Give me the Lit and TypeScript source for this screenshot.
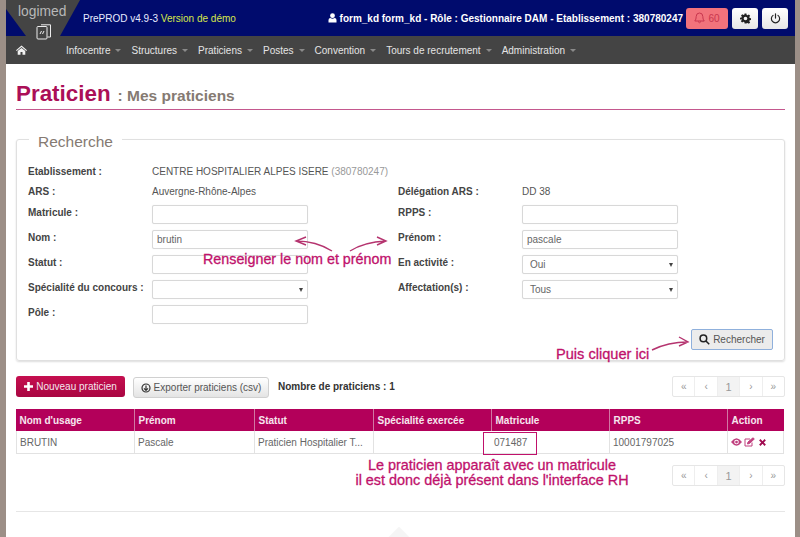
import { LitElement, html, css, svg } from "lit";
import { customElement } from "lit/decorators.js";

const caret = html`<i class="caret"></i>`;
const pager = html`<div class="pager"><span>«</span><span>‹</span><span class="cur">1</span><span>›</span><span>»</span></div>`;

const field = (label: string, control: unknown) => html`<div class="lbl">${label}</div><div class="ctl">${control}</div>`;
const input = (v = "") => html`<div class="input">${v}</div>`;
const select = (v = "") => html`<div class="input select"><span>${v}</span><i class="sel-caret"></i></div>`;

@customElement("app-root")
export class AppRoot extends LitElement {
  static styles = css`
    :host { display: block; width: 800px; height: 537px; overflow: hidden; position: relative; background: #9c8f87; font-family: "Liberation Sans", Arial, sans-serif; color: #555; font-size: 10px; }
    .page { margin: 0 5px 0 6px; height: 537px; background: #fff; position: relative; overflow: hidden; }
    .top { height: 36px; background: #000b6d; display: flex; align-items: center; color: #fff; position: relative; }
    .shape { position: absolute; left: 0; top: 0; width: 74px; height: 36px; background: #444; clip-path: polygon(0 0, 74px 0, 54px 36px, 20px 36px, 0 9px); }
    .logo-text { position: absolute; left: 12px; top: 4px; color: #b8b8b8; font-size: 13.800px; font-weight: 400; }
    .logo-icon { position: absolute; left: 30px; top: 24px; z-index: 2; }
    .ver { margin-left: 77px; color: #e8ecff; white-space: nowrap; }
    .ver b { font-weight: 400; color: #d6e84a; }
    .user { margin-left: auto; font-weight: 700; white-space: nowrap; display: flex; align-items: center; gap: 3px; }
    .tbtns { display: flex; gap: 4px; margin: 0 7px 0 3px; }
    .tb { height: 21px; width: 26px; border-radius: 3px; background: linear-gradient(#fff, #e6e6e6); display: flex; align-items: center; justify-content: center; }
    .tb.bell { width: 42px; background: #f2737c; color: #c8374e; gap: 3px; }
    .menu { height: 28px; background: #444; display: flex; align-items: center; color: #e4e4e4; white-space: nowrap; }
    .home { margin-left: 10px; width: 50px; display: flex; }
    .menu .it { margin-right: 10px; display: flex; align-items: center; gap: 5px; }
    .caret { display: inline-block; width: 0; height: 0; border: 3px solid transparent; border-top-color: #8a8a8a; border-bottom: 0; }
    .content { padding: 0 10px; }
    h1 { margin: 0; padding-top: 16px; height: 29px; display: flex; align-items: baseline; gap: 7px; color: #ab0f57; font-size: 22.400px; font-weight: 700; line-height: 28px; border-bottom: 1px solid #c4588e; }
    h1 small { color: #857a72; font-size: 15.500px; font-weight: 700; }
    .box { margin-top: 29px; height: 222px; box-sizing: border-box; border: 1px solid #e0e0e0; border-radius: 3px; box-shadow: 0 1px 2px #ddd; position: relative; padding: 21px 11px 0; }
    .legend { position: absolute; left: 12px; top: -7px; background: #fff; padding: 0 9px; color: #857a72; font-size: 15.500px; line-height: 18px; }
    .form { display: grid; grid-template-columns: 124px 156px 90px 124px 156px; grid-template-rows: 20px 20px 23px 26px 25px 25px 25px; align-items: center; }
    .lbl { font-weight: 700; color: #444; white-space: nowrap; }
    .ctl { white-space: nowrap; }
    .muted { color: #999; }
    .input { position: relative; height: 19px; width: 156px; box-sizing: border-box; border: 1px solid #d8d8d8; border-radius: 2px; padding: 0 4px; display: flex; align-items: center; color: #666; background: #fff; box-shadow: 0 0 1px #e4e4e4; top: 2px; }
    .select { padding-left: 7px; justify-content: space-between; }
    .sel-caret { width: 0; height: 0; border: 2.500px solid transparent; border-top: 4px solid #444; border-bottom: 0; }
    .search { position: absolute; left: 674px; top: 189px; width: 82px; height: 21px; box-sizing: border-box; border: 1px solid #8fb0dc; border-radius: 2px; background: #ececec; display: flex; align-items: center; justify-content: center; gap: 3px; color: #555; }
    .actions { display: flex; align-items: center; margin-top: 15px; height: 21px; }
    .new { width: 109px; height: 21px; border-radius: 3px; background: linear-gradient(#c50f4f, #a90642); color: #f4e8ee; display: flex; align-items: center; justify-content: center; gap: 3px; }
    .export { margin: 2px 0 0 8px; width: 136px; height: 21px; box-sizing: border-box; border: 1px solid #d0d0d0; border-radius: 3px; background: linear-gradient(#fff, #e4e4e4); display: flex; align-items: center; justify-content: center; gap: 3px; color: #555; }
    .count { margin-left: 9px; font-weight: 700; color: #333; }
    .pager { margin-left: auto; display: flex; height: 21px; border: 1px solid #e6e6e6; border-radius: 2px; box-sizing: border-box; width: 113px; color: #999; }
    .pager span { flex: 1; display: flex; align-items: center; justify-content: center; border-left: 1px solid #eee; }
    .pager span:first-child { border-left: 0; }
    .pager .cur { background: #f3f3f3; font-size: 11px; }
    .table { margin-top: 12px; display: grid; grid-template-columns: 118px 120px 119px 118px 118px 118px 57px; width: 768px; }
    .th { height: 22px; background: #b3005a; color: #f6e6ee; font-weight: 700; display: flex; align-items: center; padding-left: 3.500px; border-left: 1px solid #d178a4; box-sizing: border-box; white-space: nowrap; }
    .th:first-child { border-left: 0; }
    .td { height: 23px; color: #666; display: flex; align-items: center; padding-left: 3px; border-left: 1px solid #e2e2e2; border-bottom: 1px solid #e2e2e2; box-sizing: border-box; gap: 2px; white-space: nowrap; }
    .td.nob { border-left-color: transparent; padding-left: 2px; }
    .td:last-child { border-right: 1px solid #e2e2e2; }
    .pager2 { margin-top: 11px; display: flex; }
    .hr { margin-top: 25px; border-top: 1px solid #e6e6e6; }
    .tri { position: absolute; left: 378px; top: 533px; width: 30px; height: 30px; background: #f5f5f5; transform: rotate(45deg); }
    .note { position: absolute; color: #c0116b; font-size: 14.300px; line-height: 15px; white-space: nowrap; -webkit-text-stroke: .3px #c0116b; }
    .n1 { left: 197px; top: 252px; }
    .n2 { left: 550px; top: 347px; font-size: 14.600px; }
    .n3 { left: 349px; top: 458px; width: 274px; text-align: center; font-size: 14.400px; display: flex; flex-direction: column; align-items: center; }
    .mat { position: absolute; left: 477px; top: 432px; width: 54px; height: 23px; box-sizing: border-box; border: 1px solid #c0116b; }
    .overlay { position: absolute; left: -6px; top: 0; pointer-events: none; }
  `;

  render() {
    return html`<div class="page">
      <div class="top">
        <div class="shape"></div>
        <div class="logo-text">logimed</div>
        <div class="ver">PrePROD v4.9-3 <b>Version de démo</b></div>
        <div class="user">
          <svg width="9" height="10" viewBox="0 0 9 10" fill="#fff"><circle cx="4.500" cy="2.700" r="2.400"/><path d="M0.500 9.500 V7 Q.5 5.200 2.500 5 Q4.500 6.500 6.500 5 Q8.500 5.200 8.500 7 V9.500 Z"/></svg>
          form_kd form_kd - Rôle : Gestionnaire DAM - Etablissement : 380780247
        </div>
        <div class="tbtns">
          <div class="tb bell"><svg width="11" height="12" viewBox="0 0 11 12" fill="none" stroke="#c8374e" stroke-width="1"><path d="M5.500 1 Q2.200 1 2.200 4.500 Q2.200 7.500 .8 9 H10.200 Q8.800 7.500 8.800 4.500 Q8.800 1 5.500 1 Z M4 9.500 Q5.500 12 7 9.500"/></svg>60</div>
          <div class="tb"><svg width="11" height="11" viewBox="0 0 24 24" fill="#222"><path fill-rule="evenodd" d="M10 1h4l.6 3.200 2 .8L19.300 3.200l2.800 2.800-1.800 2.700.8 2 3.200.6v4l-3.200.6-.8 2 1.800 2.700-2.800 2.800-2.700-1.800-2 .8L14 23h-4l-.6-3.200-2-.8-2.700 1.800-2.800-2.800 1.800-2.700-.8-2L0 14.600v-4l3.200-.6.8-2L2.200 5.300 5 2.500 7.700 4.300l2-.8z M12 8a4 4 0 1 0 0 8a4 4 0 0 0 0-8z"/></svg></div>
          <div class="tb"><svg width="11" height="11" viewBox="0 0 12 12" fill="none" stroke="#222" stroke-width="1.300" stroke-linecap="round"><path d="M6 .8 V5.500 M3.300 2.600 A4.500 4.500 0 1 0 8.700 2.600"/></svg></div>
        </div>
      </div>
      <svg class="logo-icon" width="16" height="16" viewBox="0 0 16 16" fill="none" stroke="#ececec" stroke-width="1"><path d="M5 .8 H14.500 V13 H11.500"/><rect x="1" y="2.500" width="10" height="12.500" rx="1" fill="#444"/><path d="M4 10 l1.500-3 M6.500 10 l1.500-3"/></svg>
      <div class="menu">
        <div class="home"><svg width="11" height="10" viewBox="0 0 11 10" fill="#f2f2f2"><path d="M5.500 .5 L11 5.200 L10.300 6 L5.500 2 L.7 6 L0 5.200 Z M1.700 6 L5.500 2.900 L9.300 6 V9.700 H6.500 V7 H4.500 V9.700 H1.700 Z"/></svg></div>
        ${["Infocentre", "Structures", "Praticiens", "Postes", "Convention", "Tours de recrutement", "Administration"].map((m) => html`<div class="it">${m}${caret}</div>`)}
      </div>
      <div class="content">
        <h1>Praticien <small>: Mes praticiens</small></h1>
        <div class="box">
          <div class="legend">Recherche</div>
          <div class="form">
            ${field("Etablissement :", html`CENTRE HOSPITALIER ALPES ISERE <span class="muted">(380780247)</span>`)}
            <div></div><div></div><div></div>
            ${field("ARS :", "Auvergne-Rhône-Alpes")}<div></div>${field("Délégation ARS :", "DD 38")}
            ${field("Matricule :", input())}<div></div>${field("RPPS :", input())}
            ${field("Nom :", input("brutin"))}<div></div>${field("Prénom :", input("pascale"))}
            ${field("Statut :", input())}<div></div>${field("En activité :", select("Oui"))}
            ${field("Spécialité du concours :", select())}<div></div>${field("Affectation(s) :", select("Tous"))}
            ${field("Pôle :", input())}<div></div><div></div><div></div>
          </div>
          <div class="search"><svg width="11" height="11" viewBox="0 0 10 10" fill="none" stroke="#222" stroke-width="1.400"><circle cx="4" cy="4" r="3"/><path d="M6.300 6.300 L9.300 9.300"/></svg>Rechercher</div>
        </div>
        <div class="actions">
          <div class="new"><svg width="9" height="9" viewBox="0 0 9 9" fill="#fff"><path d="M3.200 0 H5.800 V3.200 H9 V5.800 H5.800 V9 H3.200 V5.800 H0 V3.200 H3.200 Z"/></svg>Nouveau praticien</div>
          <div class="export"><svg width="10" height="10" viewBox="0 0 10 10" fill="none" stroke="#333" stroke-width="1.200"><circle cx="5" cy="5" r="4"/><path d="M5 2.500 V7 M3 5.300 L5 7.300 L7 5.300"/></svg>Exporter praticiens (csv)</div>
          <div class="count">Nombre de praticiens : 1</div>
          ${pager}
        </div>
        <div class="table">
          ${["Nom d'usage", "Prénom", "Statut", "Spécialité exercée", "Matricule", "RPPS", "Action"].map((h) => html`<div class="th">${h}</div>`)}
          ${["BRUTIN", "Pascale", "Praticien Hospitalier T...", "", "071487", "10001797025"].map((c, i) => html`<div class="td ${i === 4 ? "nob" : ""}">${c}</div>`)}
          <div class="td">
            <svg width="11" height="8" viewBox="0 0 12 8" fill="#c0417f"><path fill-rule="evenodd" d="M0 4 Q3 0 6 0 Q9 0 12 4 Q9 8 6 8 Q3 8 0 4 Z M6 1.500 a2.500 2.500 0 1 0 0 5 a2.500 2.500 0 0 0 0-5 Z"/><circle cx="6" cy="4" r="1.500"/></svg>
            <svg width="11" height="10" viewBox="0 0 11 10" fill="none" stroke="#c0417f" stroke-width="1"><path d="M8 5.500 V9 H1 V2 H6"/><path d="M3.500 7 L4 5 L9 .8 L10.300 2 L5.500 6.500 Z" fill="#c0417f"/></svg>
            <svg style="margin-left:2px" width="7" height="7" viewBox="0 0 9 9" stroke="#a00b50" stroke-width="2.400"><path d="M1 1 L8 8 M8 1 L1 8"/></svg>
          </div>
        </div>
        <div class="pager2">${pager}</div>
        <div class="hr"></div>
      </div>
      <div class="tri"></div>
      <div class="mat"></div>
      <div class="note n1">Renseigner le nom et prénom</div>
      <div class="note n2">Puis cliquer ici</div>
      <div class="note n3"><span>Le praticien apparaît avec un matricule</span><span>il est donc déjà présent dans l'interface RH</span></div>
      <svg class="overlay" width="800" height="537" fill="none" stroke="#b5346f" stroke-width="1.400">
        ${svg`<path d="M332 251 Q316 241 296 241 M306 237 L296 241 L306 245"/>
        <path d="M350 251 Q364 242 386 241 M377 237 L386 241 L377 245"/>
        <path d="M652 350 Q668 342 688 342 M679 337 L688 342 L679 346"/>`}
      </svg>
    </div>`;
  }
}
